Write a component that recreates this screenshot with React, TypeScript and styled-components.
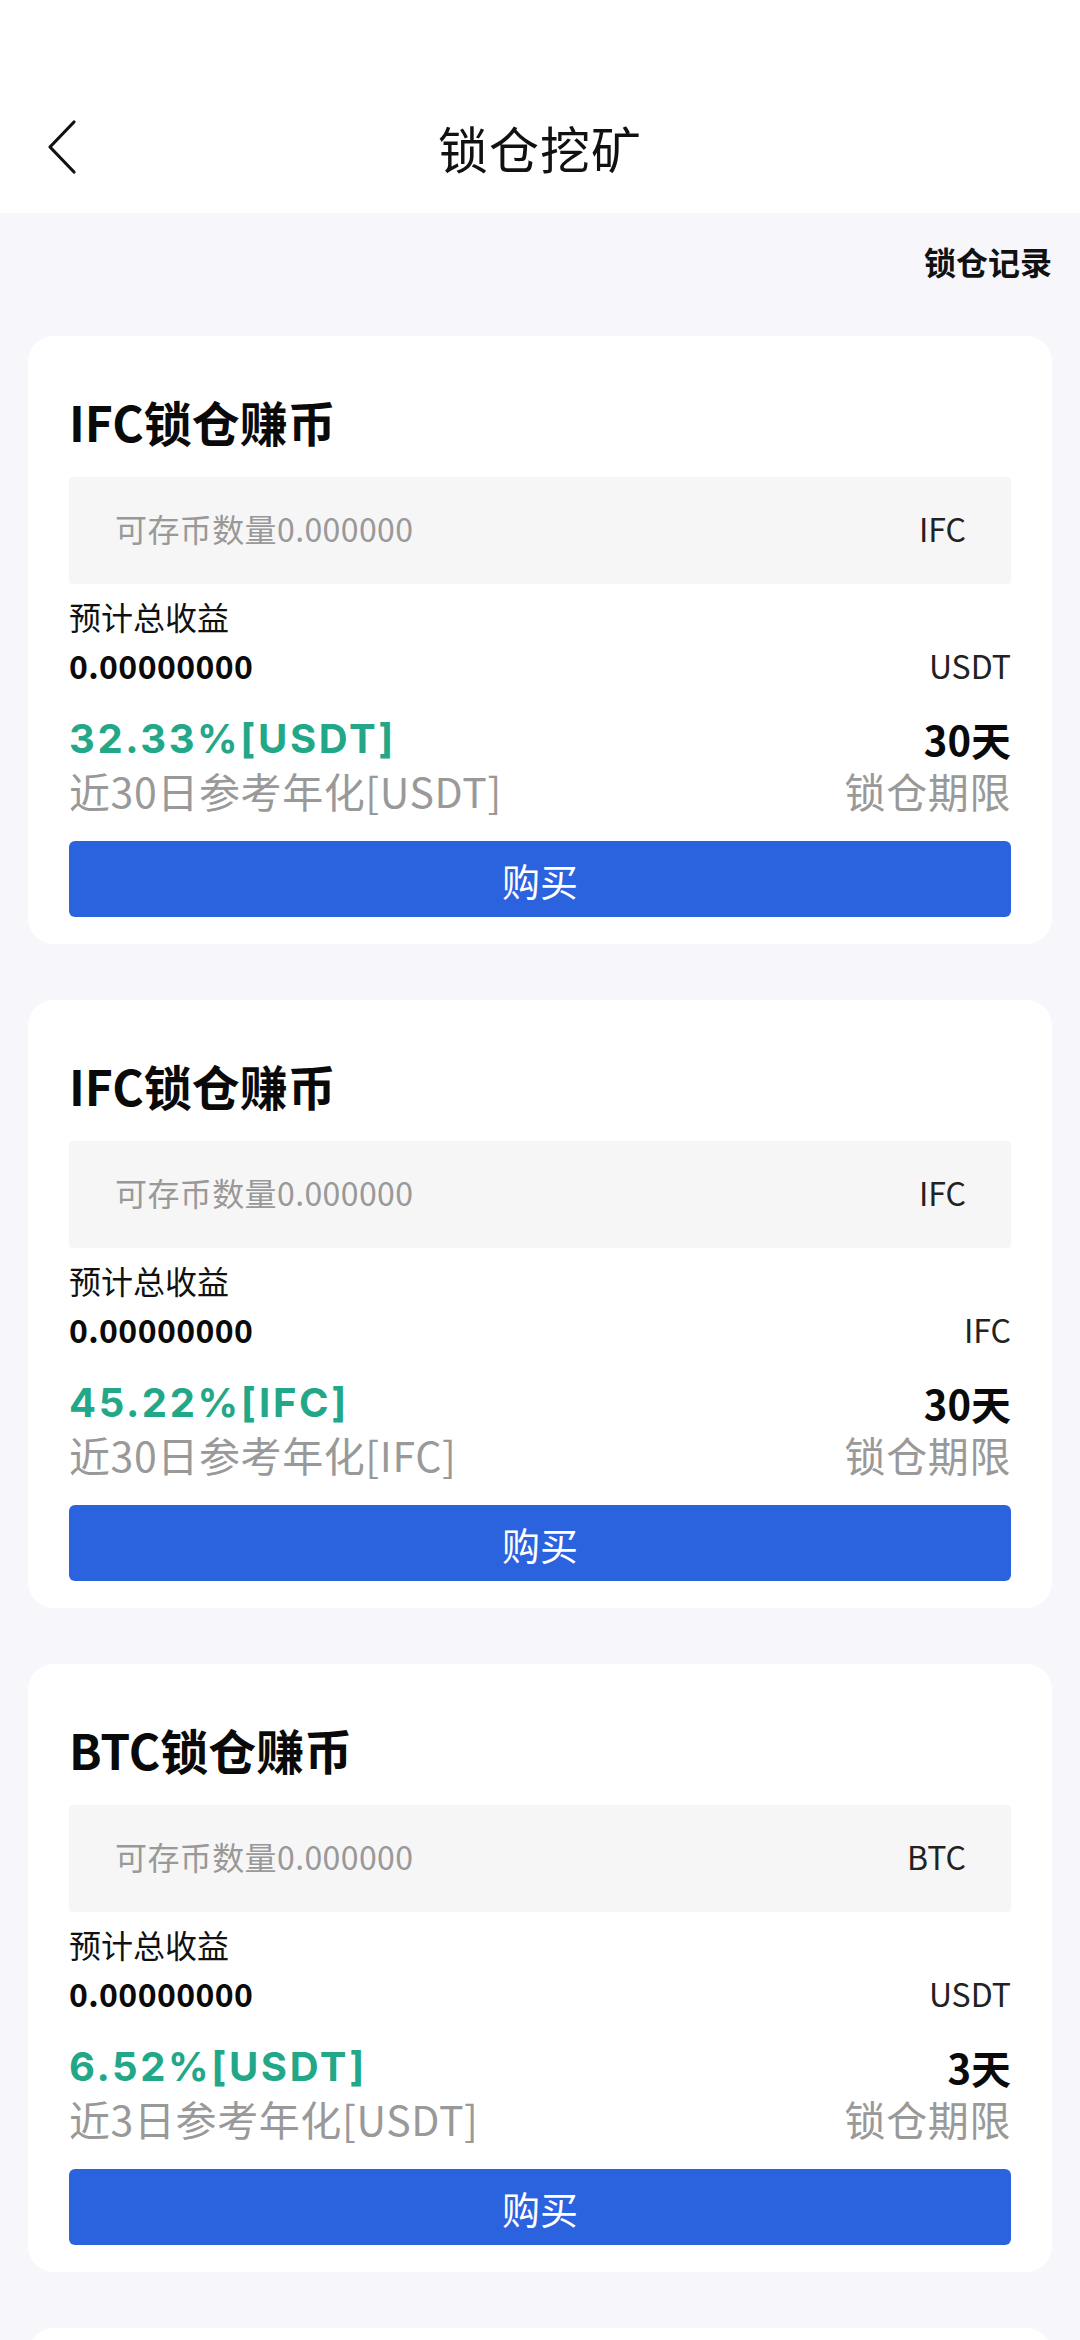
import styled, { createGlobalStyle } from "styled-components";

type Plan = {
  coin: string;
  unit: string;
  rate: string;
  days: number;
};

const PLANS: Plan[] = [
  { coin: "IFC", unit: "USDT", rate: "32.33", days: 30 },
  { coin: "IFC", unit: "IFC", rate: "45.22", days: 30 },
  { coin: "BTC", unit: "USDT", rate: "6.52", days: 3 },
  { coin: "ETH", unit: "USDT", rate: "5.18", days: 7 },
];

function BackIcon() {
  return (
    <svg width="34" height="56" viewBox="0 0 34 56" fill="none">
      <path
        d="M29 3 L5 28 L29 53"
        stroke="#111"
        strokeWidth="3.2"
        strokeLinecap="round"
        strokeLinejoin="round"
      />
    </svg>
  );
}

function PlanCard({ plan }: { plan: Plan }) {
  return (
    <Card>
      <CardTitle>{plan.coin}锁仓赚币</CardTitle>
      <AmountBox>
        <Placeholder>可存币数量0.000000</Placeholder>
        <BoxUnit>{plan.coin}</BoxUnit>
      </AmountBox>
      <Label>预计总收益</Label>
      <Row>
        <Total>0.00000000</Total>
        <Unit>{plan.unit}</Unit>
      </Row>
      <StatRow>
        <Rate>
          {plan.rate}%[{plan.unit}]
        </Rate>
        <Days>{plan.days}天</Days>
      </StatRow>
      <SubRow>
        <Muted>
          近{plan.days}日参考年化[{plan.unit}]
        </Muted>
        <Muted>锁仓期限</Muted>
      </SubRow>
      <BuyButton>购买</BuyButton>
    </Card>
  );
}

export default function App() {
  return (
    <>
      <GlobalStyle />
      <Page>
        <Header>
          <NavBar>
            <BackButton>
              <BackIcon />
            </BackButton>
            <Title>锁仓挖矿</Title>
            <span />
          </NavBar>
        </Header>
        <RecordRow>
          <RecordLink>锁仓记录</RecordLink>
        </RecordRow>
        <CardList>
          {PLANS.map((p, i) => (
            <PlanCard key={i} plan={p} />
          ))}
        </CardList>
      </Page>
    </>
  );
}

const GlobalStyle = createGlobalStyle`
  html, body {
    margin: 0;
    padding: 0;
    background: #f7f7fb;
  }
  body {
    font-family: "Noto Sans CJK SC", "Noto Sans", sans-serif;
    color: #111;
  }
  * {
    box-sizing: border-box;
  }
`;

const Page = styled.div`
  width: 1080px;
  height: 2340px;
  overflow: hidden;
  background: #f7f7fb;
`;

const Header = styled.header`
  background: #fff;
  height: 213px;
  padding-top: 80px;
`;

const NavBar = styled.div`
  height: 133px;
  display: grid;
  grid-template-columns: 1fr auto 1fr;
  align-items: center;
  padding: 0 45px;
`;

const BackButton = styled.button`
  background: none;
  border: none;
  padding: 0;
  width: 40px;
  display: flex;
  align-items: center;
  cursor: pointer;
`;

const Title = styled.h1`
  margin: 0;
  font-size: 50px;
  font-weight: 400;
  line-height: 60px;
  color: #111;
  letter-spacing: 1px;
`;

const RecordRow = styled.div`
  display: flex;
  justify-content: flex-end;
  padding: 26px 28px 0;
`;

const RecordLink = styled.span`
  font-size: 32px;
  font-weight: 700;
  line-height: 44px;
  color: #111;
`;

const CardList = styled.div`
  display: flex;
  flex-direction: column;
  gap: 56px;
  padding: 53px 28px 0;
`;

const Card = styled.section`
  background: #fff;
  border-radius: 26px;
  padding: 56px 41px 27px;
  display: flex;
  flex-direction: column;
`;

const CardTitle = styled.h2`
  margin: 0;
  font-size: 48px;
  font-weight: 700;
  line-height: 58px;
  color: #0a0a0a;
`;

const AmountBox = styled.div`
  margin-top: 27px;
  height: 107px;
  background: #f6f6f6;
  border-radius: 4px;
  display: flex;
  align-items: center;
  justify-content: space-between;
  padding: 0 45px 6px 46px;
`;

const Placeholder = styled.span`
  font-size: 32px;
  line-height: 40px;
  color: #999;
  letter-spacing: 0.4px;
`;

const BoxUnit = styled.span`
  font-size: 32px;
  line-height: 40px;
  color: #222;
`;

const Label = styled.div`
  margin-top: 11px;
  font-size: 32px;
  line-height: 42px;
  color: #111;
`;

const Row = styled.div`
  margin-top: 7px;
  height: 42px;
  display: flex;
  align-items: center;
  justify-content: space-between;
`;

const Total = styled.span`
  font-size: 32px;
  line-height: 42px;
  font-weight: 700;
  color: #0a0a0a;
  letter-spacing: 0.4px;
`;

const Unit = styled.span`
  font-size: 32px;
  line-height: 42px;
  color: #222;
`;

const StatRow = styled.div`
  margin-top: 29px;
  height: 48px;
  display: flex;
  align-items: center;
  justify-content: space-between;
`;

const Rate = styled.span`
  font-family: "Inter", "Noto Sans", sans-serif;
  font-size: 40px;
  line-height: 48px;
  font-weight: 700;
  letter-spacing: 2.6px;
  color: #22a888;
`;

const Days = styled.span`
  font-size: 40px;
  line-height: 48px;
  font-weight: 700;
  color: #0a0a0a;
`;

const SubRow = styled.div`
  margin-top: 2px;
  height: 50px;
  display: flex;
  align-items: center;
  justify-content: space-between;
`;

const Muted = styled.span`
  font-size: 41px;
  line-height: 50px;
  color: #999;
  letter-spacing: 0.6px;
`;

const BuyButton = styled.button`
  margin-top: 26px;
  height: 76px;
  border: none;
  border-radius: 6px;
  background: #2b62de;
  color: #fff;
  font-family: "Noto Sans CJK SC", sans-serif;
  font-size: 38px;
  cursor: pointer;
`;
